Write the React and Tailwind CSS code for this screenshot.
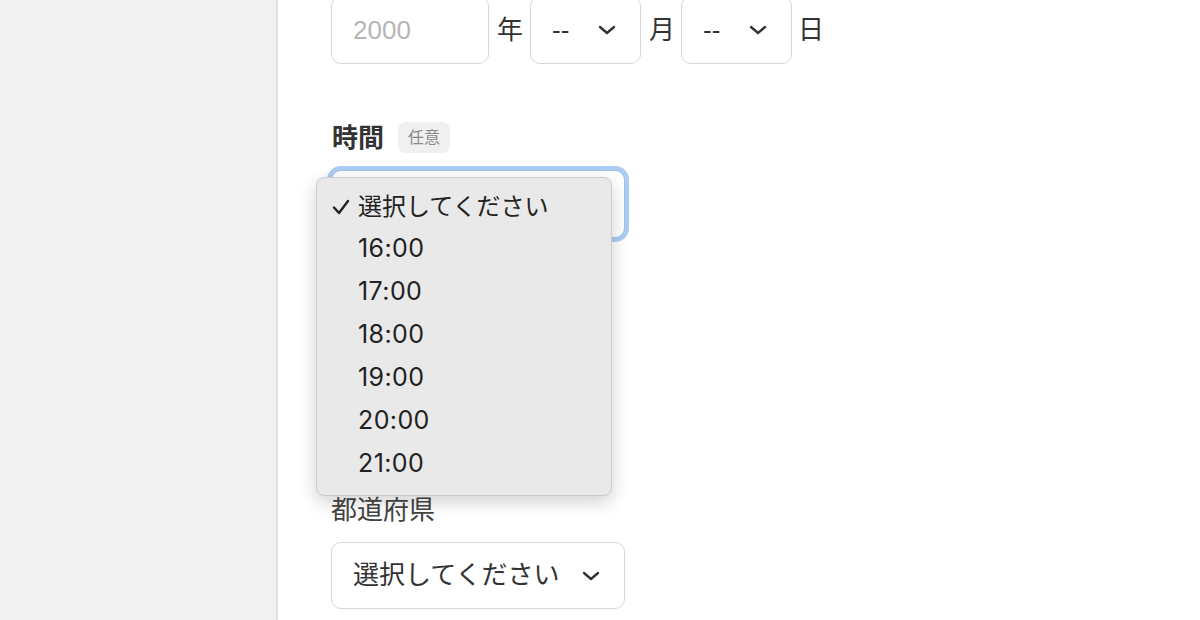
import React from "react";

const jp = { fontFamily: '"Liberation Sans", "Noto Sans CJK JP", sans-serif' };
const pop = { fontFamily: 'Inter, "Noto Sans CJK JP", sans-serif' };

function Chevron({ className = "" }) {
  return (
    <svg width="18" height="10" viewBox="0 0 18 10" className={className}>
      <polyline points="2,2 9,8 16,2" fill="none" stroke="#333" strokeWidth="2.4" strokeLinecap="round" strokeLinejoin="round" />
    </svg>
  );
}

function Check() {
  return (
    <svg width="18" height="16" viewBox="0 0 18 16">
      <polyline points="2,8.5 7,14 16,2" fill="none" stroke="#222" strokeWidth="2.4" strokeLinecap="round" strokeLinejoin="round" />
    </svg>
  );
}

export default function App() {
  const times = ["16:00", "17:00", "18:00", "19:00", "20:00", "21:00"];
  return (
    <div className="flex w-[1200px] h-[620px] overflow-hidden bg-white text-[#333]" style={jp}>
      <div className="w-[278px] h-full bg-[#f2f2f2] border-r-2 border-[#e2e2e2] shrink-0" />
      <div className="flex-1 pl-[53px]">
        <div className="flex items-center mt-[-4px] text-[26px]">
          <div className="w-[158px] h-[68px] rounded-[10px] border border-[#d6d6d6] flex items-center pl-[21px] text-[#b5b5b5]">2000</div>
          <span className="ml-[8px] mr-[7px]">年</span>
          <div className="w-[111px] h-[68px] rounded-[10px] border border-[#d6d6d6] flex items-center justify-between pl-[21px] pr-[24px]">
            <span>--</span>
            <Chevron />
          </div>
          <span className="ml-[8px] mr-[6px]">月</span>
          <div className="w-[111px] h-[68px] rounded-[10px] border border-[#d6d6d6] flex items-center justify-between pl-[21px] pr-[24px]">
            <span>--</span>
            <Chevron />
          </div>
          <span className="ml-[6px]">日</span>
        </div>

        <div className="flex items-center mt-[58px] h-[31px]">
          <span className="text-[26px] font-bold leading-none pl-[1px]">時間</span>
          <span className="ml-[14px] h-[31px] px-[10px] rounded-[8px] bg-[#f0f0f0] text-[#8a8a8a] text-[16px] flex items-center">任意</span>
        </div>

        <div className="relative mt-[17px] w-[294px] h-[68px] rounded-[10px] border border-[#9fc3ee] ring-4 ring-[#abcdf4] bg-white">
          <div
            className="absolute left-[-16px] top-[6px] w-[296px] h-[319px] rounded-[8px] bg-[#e9e9e9] border border-[#cdcdcd] shadow-[0_6px_18px_rgba(0,0,0,0.18)] pt-[8px] text-[#222] z-10"
            style={pop}
          >
            <div className="h-[41px] flex items-center">
              <span className="w-[41px] pl-[15px] flex items-center"><Check /></span>
              <span className="text-[24px] leading-none" style={jp}>選択してください</span>
            </div>
            {times.map((t) => (
              <div key={t} className="h-[43px] flex items-center pl-[41px] text-[25px] tracking-[0.4px] leading-none">{t}</div>
            ))}
          </div>
        </div>

        <div className="mt-[254px] h-[36px] text-[26px] leading-[36px] text-[#444]">都道府県</div>
        <div className="mt-[14px] w-[294px] h-[67px] rounded-[10px] border border-[#d6d6d6] flex items-center pl-[21px] text-[26px]">
          <span>選択してください</span>
          <Chevron className="ml-[23px]" />
        </div>
      </div>
    </div>
  );
}
